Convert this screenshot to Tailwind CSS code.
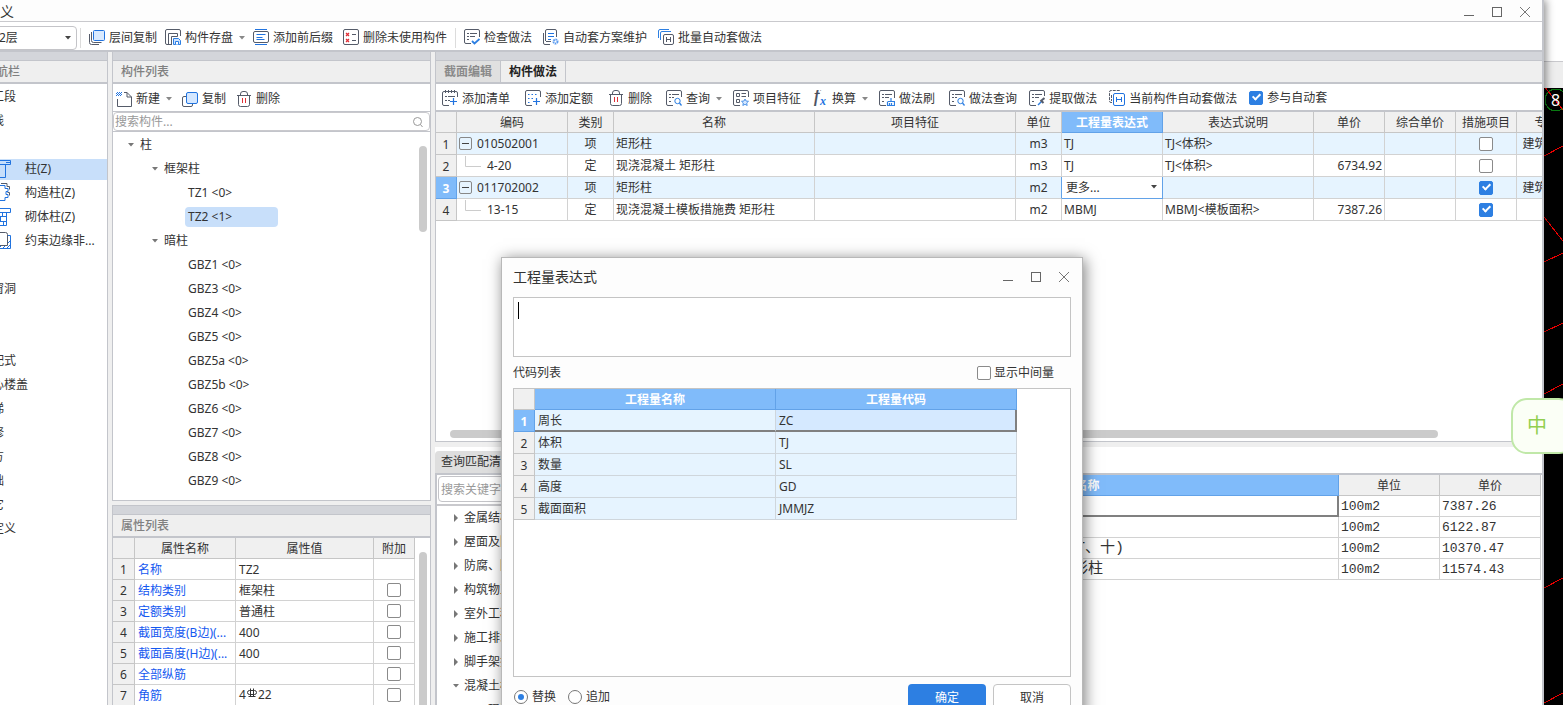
<!DOCTYPE html>
<html lang="zh-CN">
<head>
<meta charset="utf-8">
<title>定义</title>
<script src="https://cdn.jsdelivr.net/npm/@tailwindcss/browser@4"></script>
</head>
<body class="relative flex h-screen overflow-hidden bg-white font-['Noto_Sans','Noto_Sans_CJK_SC',sans-serif] text-xs leading-4 text-[#333]">

<svg class="hidden" aria-hidden="true">
  <defs>
    <symbol id="i-floorcopy" viewBox="0 0 16 16" fill="none"><path d="M.5 5v8.500a2 2 0 0 0 2 2H10M2.500 3v8.500a2 2 0 0 0 2 2h8" stroke="#555b69"/><rect x="4.500" y="1.500" width="11" height="10" rx="1" fill="#d9eaff" stroke="#2173df"/></symbol>
    <symbol id="i-save" viewBox="0 0 16 16" fill="none"><path d="M7 15.500H2a1.500 1.500 0 0 1-1.500-1.500V2A1.500 1.500 0 0 1 2 .5h12A1.500 1.500 0 0 1 15.500 2v5M3.500 15V4.500h9v3h-6V15" stroke="#555b69"/><path d="M8.500 9.500h5l2 2v4h-7z" fill="#cfe3ff" stroke="#2d7fe2"/><path d="M10.500 15.500v-3h3v3" stroke="#2d7fe2" fill="#fff"/></symbol>
    <symbol id="i-prefix" viewBox="0 0 16 16" fill="none"><rect x=".5" y="2.500" width="15" height="11" rx="1.500" stroke="#555b69"/><path d="M2 .5h12M2 15.500h12M3.500 5.500h9M3.500 8.500h6M3.500 10.500h8" stroke="#2173df"/></symbol>
    <symbol id="i-unused" viewBox="0 0 16 16" fill="none"><rect x=".5" y=".5" width="15" height="15" rx="1.500" stroke="#555b69"/><path d="m3 4 3 3m0-3L3 7m0 3 3 3m0-3-3 3" stroke="#e02f37" stroke-width="1.300"/><path d="M9 5.500h4M9 11.500h4" stroke="#555b69"/></symbol>
    <symbol id="i-check" viewBox="0 0 16 16" fill="none"><path d="M7 14.500H2A1.500 1.500 0 0 1 .5 13V2A1.500 1.500 0 0 1 2 .5h12A1.500 1.500 0 0 1 15.500 2v6" stroke="#555b69"/><path d="M3 4.500h2m1 0h7M3 7.500h2m1 0h5M3 10.500h2" stroke="#555b69"/><path d="m8 12 2.500 2.500L15.500 10" stroke="#2d7fe2" stroke-width="1.800"/></symbol>
    <symbol id="i-plan" viewBox="0 0 16 16" fill="none"><path d="M7 15.500H2A1.500 1.500 0 0 1 .5 14V4M2.500 12V2A1.500 1.500 0 0 1 4 .5h8A1.500 1.500 0 0 1 13.500 2v6M3 12.500h5" stroke="#555b69"/><path d="M5 4.500h6M5 7.500h6M5 10.500h3" stroke="#2173df"/><circle cx="12.500" cy="12.500" r="2" stroke="#5c9cf0" stroke-width="2" stroke-dasharray="1.500 .6"/></symbol>
    <symbol id="i-batch" viewBox="0 0 16 16" fill="none"><path d="M.5 9V2A1.500 1.500 0 0 1 2 .5h9M2.500 11V4A1.500 1.500 0 0 1 4 2.500h9" stroke="#2d7fe2"/><rect x="5.500" y="5.500" width="10" height="10" rx="1.500" stroke="#555b69"/><path d="M8.500 8v5m4-5v5m-4-2.500h4" stroke="#555b69"/></symbol>
    <symbol id="i-auto" viewBox="0 0 16 16" fill="none"><path d="M3 12.500H2A1.500 1.500 0 0 1 .5 11V2A1.500 1.500 0 0 1 2 .5h9M2.500 5v6" stroke="#555b69" stroke-dasharray="3 1"/><rect x="4.500" y="3.500" width="11" height="12" rx="1.500" stroke="#2173df"/><path d="M7.500 7v5m5-5v5m-5-2.500h5" stroke="#2173df"/></symbol>
    <symbol id="i-new" viewBox="0 0 16 16" fill="none"><path d="M8 1.500h3l4.500 4.500v9.500H1.500V8M11 1.500V6h4.500" stroke="#555b69"/><path d="M1 1h1v1H1zM3 1h1v1H3zM2 2h1v1H2zM4 2h1v1H4zM1 3h1v1H1zM3 3h1v1H3zM2 4h1v1H2zM4 4h1v1H4zM0 2h1v1H0zM0 4h1v1H0zM5 1h1v1H5zM5 3h1v1H5z" fill="#2173df"/></symbol>
    <symbol id="i-copy" viewBox="0 0 16 16" fill="none"><path d="M4 5.500H2A1.500 1.500 0 0 0 .5 7v7A1.500 1.500 0 0 0 2 15.500h7a1.500 1.500 0 0 0 1.500-1.500v-1" stroke="#555b69"/><rect x="4.500" y="1.500" width="11" height="11" rx="1.500" fill="#d4e7ff" stroke="#2173df"/></symbol>
    <symbol id="i-del" viewBox="0 0 16 16" fill="none"><path d="M1 4.500h14M4.500 4V3A2.500 2.500 0 0 1 7 .5h2A2.500 2.500 0 0 1 11.500 3v1M2.500 4.500v9a2 2 0 0 0 2 2h7a2 2 0 0 0 2-2v-9" stroke="#555b69"/><path d="M6.500 7v5m3-5v5" stroke="#e02f37"/></symbol>
    <symbol id="i-addlist" viewBox="0 0 16 16" fill="none"><path d="M7 15.500H2A1.500 1.500 0 0 1 .5 14V3A1.500 1.500 0 0 1 2 1.500h12A1.500 1.500 0 0 1 15.500 3v4M3.500 0v3m3-3v3m3-3v3m3-3v3M3 6.500h2m1 0h7M3 10.500h2m1 0h2" stroke="#555b69"/><path d="M11.500 8v7M8 11.500h7" stroke="#2173df" stroke-width="1.200"/></symbol>
    <symbol id="i-addquota" viewBox="0 0 16 16" fill="none"><path d="M7 15.500H2A1.500 1.500 0 0 1 .5 14V2A1.500 1.500 0 0 1 2 .5h12A1.500 1.500 0 0 1 15.500 2v5" stroke="#555b69"/><path d="M3 4.500h1.500m2 0H8m2 0h1.500M3 8.500h1.500m2 0H8M3 12.500h1.500" stroke="#2173df" stroke-width="1.200"/><path d="M11.500 8v7M8 11.500h7" stroke="#2173df" stroke-width="1.200"/></symbol>
    <symbol id="i-query" viewBox="0 0 16 16" fill="none"><path d="M7 15.500H2A1.500 1.500 0 0 1 .5 14V2A1.500 1.500 0 0 1 2 .5h12A1.500 1.500 0 0 1 15.500 2v5M3 4.500h2m1 0h7M3 7.500h2m1 0h2M3 11.500h2" stroke="#555b69"/><circle cx="11.500" cy="11" r="2.700" stroke="#2d7fe2"/><path d="m13.500 13 2 2.500" stroke="#2d7fe2" stroke-width="1.300"/></symbol>
    <symbol id="i-feature" viewBox="0 0 16 16" fill="none"><path d="M7 15.500H2A1.500 1.500 0 0 1 .5 14V2A1.500 1.500 0 0 1 2 .5h12A1.500 1.500 0 0 1 15.500 2v5M3.500 3.500h3v3h-3zM3.500 9.500h3v3h-3zM8.500 3.500H13M8.500 6.500H13" stroke="#555b69"/><path d="m12 9 1 2 2.500.3-1.800 1.700.5 2.500-2.200-1.200-2.200 1.200.5-2.500-1.800-1.700L11 11z" fill="#d4e7ff" stroke="#2d7fe2" stroke-width=".8"/></symbol>
    <symbol id="i-fx" viewBox="0 0 16 16"><text x="2" y="12" font-family="Liberation Serif" font-style="italic" font-size="18" fill="#444a58" stroke="#444a58" stroke-width=".4">f</text><text x="8" y="15" font-family="Liberation Serif" font-style="italic" font-weight="bold" font-size="12" fill="#2173df">x</text></symbol>
    <symbol id="i-brush" viewBox="0 0 16 16" fill="none"><path d="M7 15.500H2A1.500 1.500 0 0 1 .5 14V2A1.500 1.500 0 0 1 2 .5h12A1.500 1.500 0 0 1 15.500 2v6M3 4.500h2m1 0h7M3 7.500h2m1 0h4M3 11.500h2" stroke="#555b69"/><path d="M12 8v3M9 11.500h6.500V15.500H8.500v-4M10.500 15v-2m2 2v-2" stroke="#2d7fe2" stroke-width="1.200"/></symbol>
    <symbol id="i-extract" viewBox="0 0 16 16" fill="none"><path d="M7 15.500H2A1.500 1.500 0 0 1 .5 14V2A1.500 1.500 0 0 1 2 .5h12A1.500 1.500 0 0 1 15.500 2v4M3 4.500h2m1 0h7M3 7.500h2m1 0h4M3 11.500h2" stroke="#555b69"/><path d="m9 15 4-4" stroke="#2d7fe2" stroke-width="1.500"/><path d="m11.500 10 3 3m-1.500-3 2.500-2" stroke="#555b69" stroke-width="2"/></symbol>
    <symbol id="i-min" viewBox="0 0 12 12" fill="none"><path d="M1 9.500h10" stroke="#666"/></symbol>
    <symbol id="i-max" viewBox="0 0 12 12" fill="none"><rect x="1.500" y="1.500" width="9" height="9" stroke="#666"/></symbol>
    <symbol id="i-close" viewBox="0 0 12 12" fill="none"><path d="m1 1 10 10M11 1 1 11" stroke="#777"/></symbol>
    <symbol id="i-down" viewBox="0 0 6 4"><path d="M0 0h6L3 3.500z" fill="currentColor"/></symbol>
    <symbol id="i-right" viewBox="0 0 4 8"><path d="M0 0v8l4-4z" fill="currentColor"/></symbol>
  </defs>
</svg>

<!-- main window; its first 20px lie beyond the left edge of the screen -->
<main class="relative z-10 -ml-5 flex min-w-0 flex-1 flex-col border-r-2 border-[#c3c5cb] bg-white shadow-[2px_0_8px_rgba(0,0,0,0.45)]">
  <header class="flex h-[22px] shrink-0 items-center justify-between border-b border-[#c9c9cd] bg-[#fdfdfd] pt-0.5 pr-[11px]">
    <h1 class="pl-1.5 text-sm">定义</h1>
    <div class="flex gap-4">
      <button aria-label="最小化"><svg class="size-3"><use href="#i-min"/></svg></button>
      <button aria-label="最大化"><svg class="size-3"><use href="#i-max"/></svg></button>
      <button aria-label="关闭"><svg class="size-3"><use href="#i-close"/></svg></button>
    </div>
  </header>

  <div class="flex h-7 shrink-0 items-center gap-2 whitespace-nowrap pt-1 leading-[18px] [&_button]:flex [&_button]:items-start [&_button]:gap-1 [&_button>svg:first-child]:size-4">
    <div class="relative -mr-[5px]">
      <select aria-label="楼层" class="h-6 w-[97px] appearance-none rounded border border-[#c4c4c8] bg-white pl-1.5"><option>第2层</option></select>
      <svg class="pointer-events-none absolute top-2.5 right-1.5 h-1 w-1.5 text-[#444]"><use href="#i-down"/></svg>
    </div>
    <span class="h-5 w-px bg-[#dcdcdc]"></span>
    <div class="flex items-center gap-2">
      <button><svg><use href="#i-floorcopy"/></svg>层间复制</button>
      <button><svg><use href="#i-save"/></svg>构件存盘<svg class="ml-0.5 h-1 w-1.5 self-center text-[#888]"><use href="#i-down"/></svg></button>
      <button><svg><use href="#i-prefix"/></svg>添加前后缀</button>
      <button class="pl-0.5"><svg><use href="#i-unused"/></svg>删除未使用构件</button>
    </div>
    <span class="h-5 w-px bg-[#dcdcdc]"></span>
    <div class="flex items-center gap-[11px]">
      <button><svg><use href="#i-check"/></svg>检查做法</button>
      <button><svg><use href="#i-plan"/></svg>自动套方案维护</button>
      <button><svg><use href="#i-batch"/></svg>批量自动套做法</button>
    </div>
  </div>

  <div class="flex min-h-0 flex-1 gap-1 border-t-2 border-[#c3c5cb] bg-[#efefef]">
    <!-- navigation -->
    <nav class="flex w-32 shrink-0 flex-col border-r border-[#c3c5cb] bg-white">
      <div class="h-[9px] shrink-0 border-b border-[#c3c5cb] bg-[#d3d5da]"></div>
      <h2 class="h-[23px] shrink-0 border-b-2 border-[#c3c5cb] bg-[#efefef] pt-[3px] pl-1 font-medium text-[#808080]">导航栏</h2>
      <ul class="[&>li]:flex [&>li]:h-6 [&>li]:items-center [&>li]:pt-0.5 [&>li]:whitespace-nowrap [&_svg]:ml-3 [&_svg]:mr-[13px] [&_svg]:size-5 [&_svg]:shrink-0">
        <li>施工段</li>
        <li>轴线</li>
        <li></li>
        <li><a href="#" class="flex h-[21px] w-full items-center bg-[#c8dffa]"><svg viewBox="0 0 20 20" fill="none" stroke="#2173df"><path d="M1 1.500h17.500v4H1zM5.500 5.500v13h8v-13M14 3.500h4"/></svg>柱(Z)</a></li>
        <li><a href="#" class="flex items-center"><svg viewBox="0 0 20 20" fill="none" stroke="#2173df"><path d="M4 2.500h9v3h3v3h-2v3h2v3h-3v3H4"/><path d="M9 .5h6v3h2.500v3M15.500 9.500h2v3" stroke="#555b69"/></svg>构造柱(Z)</a></li>
        <li><a href="#" class="flex items-center"><svg viewBox="0 0 20 20" fill="none" stroke="#2173df"><path d="M1 1.500h17.500v4H1zM5.500 5.500v13h9v-13M6 9.500h8M6 14.500h8M10.500 6v4M8.500 10v4M11.500 15v4"/></svg>砌体柱(Z)</a></li>
        <li><a href="#" class="flex items-center"><svg viewBox="0 0 20 20" fill="none" stroke="#2173df"><path d="M16 4.500h2.500v13H3M15 17l3-3M11 17l7-7M7 17l3-3"/><path d="M3 1.500h10.500a2 2 0 0 1 2 2v11H3" fill="#fff" stroke="#555b69"/></svg>约束边缘非...</a></li>
        <li></li>
        <li>门窗洞</li>
        <li></li>
        <li></li>
        <li>装配式</li>
        <li>空心楼盖</li>
        <li>楼梯</li>
        <li>装修</li>
        <li>土方</li>
        <li>基础</li>
        <li>其它</li>
        <li>自定义</li>
      </ul>
    </nav>

    <!-- component list and properties -->
    <div class="flex w-[319px] shrink-0 flex-col gap-1">
      <section class="flex min-h-0 flex-1 flex-col border-x border-[#c3c5cb]">
        <div class="h-[9px] shrink-0 border-b border-[#c3c5cb] bg-[#d3d5da]"></div>
        <h2 class="h-[23px] shrink-0 border-b-2 border-[#c3c5cb] pt-[3px] pl-2 font-medium text-[#808080]">构件列表</h2>
        <div class="flex h-7 shrink-0 items-center gap-2.5 border-b border-[#c3c5cb] bg-white pt-0.5 pl-[3px] [&_button]:flex [&_button]:items-center [&_button]:gap-1 [&_button>svg:first-child]:size-4">
          <button><svg><use href="#i-new"/></svg>新建<svg class="ml-0.5 h-1 w-1.5 text-[#888]"><use href="#i-down"/></svg></button>
          <button><svg><use href="#i-copy"/></svg>复制</button>
          <button><svg><use href="#i-del"/></svg>删除</button>
        </div>
        <div class="relative shrink-0 bg-white">
          <input type="text" aria-label="搜索构件" placeholder="搜索构件..." class="block h-[19px] w-full rounded border border-[#c9c9cd] pl-px leading-4 placeholder:text-[#999]">
          <svg class="absolute top-1 right-1.5 size-3" viewBox="0 0 12 12" fill="none" stroke="#999"><circle cx="5.500" cy="5.500" r="4"/><path d="m8.500 8.500 2 2.500"/></svg>
        </div>
        <div class="relative min-h-0 flex-1 overflow-hidden border-y border-[#c3c5cb] bg-white">
          <ul class="[&_li]:flex [&_li]:h-6 [&_li]:items-center [&_li]:pt-0.5 [&_svg]:mr-1.5 [&_svg]:h-1 [&_svg]:w-1.5 [&_svg]:text-[#777]">
            <li class="pl-[15px]"><svg><use href="#i-down"/></svg>柱</li>
            <li class="pl-[39px]"><svg><use href="#i-down"/></svg>框架柱</li>
            <li class="pl-[75px]">TZ1 &lt;0&gt;</li>
            <li class="pl-[72px]"><span class="w-[93px] rounded bg-[#c8dffa] py-0.5 pl-[3px]">TZ2 &lt;1&gt;</span></li>
            <li class="pl-[39px]"><svg><use href="#i-down"/></svg>暗柱</li>
            <li class="pl-[75px]">GBZ1 &lt;0&gt;</li>
            <li class="pl-[75px]">GBZ3 &lt;0&gt;</li>
            <li class="pl-[75px]">GBZ4 &lt;0&gt;</li>
            <li class="pl-[75px]">GBZ5 &lt;0&gt;</li>
            <li class="pl-[75px]">GBZ5a &lt;0&gt;</li>
            <li class="pl-[75px]">GBZ5b &lt;0&gt;</li>
            <li class="pl-[75px]">GBZ6 &lt;0&gt;</li>
            <li class="pl-[75px]">GBZ7 &lt;0&gt;</li>
            <li class="pl-[75px]">GBZ8 &lt;0&gt;</li>
            <li class="pl-[75px]">GBZ9 &lt;0&gt;</li>
          </ul>
          <div class="absolute top-3.5 right-[3px] h-[86px] w-2 rounded-full bg-[#cbcbcb]"></div>
        </div>
      </section>

      <section class="flex h-[200px] shrink-0 flex-col overflow-hidden border-x border-[#c3c5cb]">
        <div class="h-[10px] shrink-0 border-y border-[#c3c5cb] bg-[#d3d5da]"></div>
        <h2 class="h-[23px] shrink-0 border-b-2 border-[#c3c5cb] pt-[3px] pl-2 font-medium text-[#808080]">属性列表</h2>
        <div class="relative flex-1 bg-white">
          <table class="w-[302px] table-fixed border-separate border-spacing-0 [&_td]:border-r [&_td]:border-b [&_td]:border-[#d2d2d2] [&_td]:p-0 [&_td]:pt-0.5 [&_td]:pl-[3px] [&_td:nth-child(2)]:text-[#1458f0] [&_td:last-child]:pt-0 [&_td:last-child]:pl-0 [&_td:last-child]:text-center [&_th]:border-r [&_th]:border-b [&_th]:border-[#c6c6c6] [&_th]:bg-[#f0f0f0] [&_th]:p-0 [&_th]:pt-0.5 [&_th]:font-normal [&_tr]:h-[21px] [&_input]:block [&_input]:mx-auto [&_input]:size-3.5 [&_input]:appearance-none [&_input]:rounded-xs [&_input]:border [&_input]:border-[#8a8a8a] [&_input]:bg-white">
            <thead><tr><th class="w-[22px]"></th><th class="w-[101px]">属性名称</th><th class="w-[138px]">属性值</th><th class="w-[41px]">附加</th></tr></thead>
            <tbody>
              <tr><th>1</th><td>名称</td><td>TZ2</td><td></td></tr>
              <tr><th>2</th><td>结构类别</td><td>框架柱</td><td><input type="checkbox" aria-label="附加 结构类别"></td></tr>
              <tr><th>3</th><td>定额类别</td><td>普通柱</td><td><input type="checkbox" aria-label="附加 定额类别"></td></tr>
              <tr><th>4</th><td class="whitespace-nowrap">截面宽度(B边)(...</td><td>400</td><td><input type="checkbox" aria-label="附加 截面宽度"></td></tr>
              <tr><th>5</th><td class="whitespace-nowrap">截面高度(H边)(...</td><td>400</td><td><input type="checkbox" aria-label="附加 截面高度"></td></tr>
              <tr><th>6</th><td>全部纵筋</td><td></td><td><input type="checkbox" aria-label="附加 全部纵筋"></td></tr>
              <tr><th>7</th><td>角筋</td><td class="pt-0!"><span class="flex items-center">4<svg class="mx-px mb-1 size-2.5" viewBox="0 0 10 10" fill="none" stroke="#333"><rect x=".5" y="2.500" width="9" height="4" rx="2"/><path d="M3.500.5v8M6.500.5v8M1.500 8.500h7"/></svg>22</span></td><td><input type="checkbox" aria-label="附加 角筋"></td></tr>
            </tbody>
          </table>
          <div class="absolute top-3.5 right-[3px] bottom-0 w-2 rounded-t-full bg-[#cbcbcb]"></div>
        </div>
      </section>
    </div>

    <!-- method editor -->
    <div class="flex min-w-0 flex-1 flex-col gap-[5px]">
      <section class="flex min-h-0 flex-1 flex-col border-b border-l border-[#c3c5cb]">
        <div class="h-[9px] shrink-0 border-b border-[#c3c5cb] bg-[#d3d5da]"></div>
        <div class="flex h-[23px] shrink-0 border-b-2 border-[#c3c5cb] font-bold [&_button]:w-[65px] [&_button]:border-r [&_button]:border-[#c3c5cb]">
          <button class="bg-[#e0e0e0] text-[#8a8a8a]">截面编辑</button>
          <button class="text-[#222]">构件做法</button>
        </div>
        <div class="flex h-7 shrink-0 items-center gap-3.5 overflow-hidden border-b-2 border-[#c3c5cb] bg-white pt-1 pl-1.5 leading-[18px] whitespace-nowrap [&_button]:flex [&_button]:items-start [&_button]:gap-1 [&_button>svg:first-child]:size-4">
          <div class="flex gap-[15px]">
            <button><svg><use href="#i-addlist"/></svg>添加清单</button>
            <button><svg><use href="#i-addquota"/></svg>添加定额</button>
            <button><svg><use href="#i-del"/></svg>删除</button>
          </div>
          <div class="flex gap-[11px]">
            <button><svg><use href="#i-query"/></svg>查询<svg class="ml-0.5 h-1 w-1.5 self-center text-[#888]"><use href="#i-down"/></svg></button>
            <button><svg><use href="#i-feature"/></svg>项目特征</button>
            <button><svg><use href="#i-fx"/></svg>换算<svg class="ml-0.5 h-1 w-1.5 self-center text-[#888]"><use href="#i-down"/></svg></button>
            <button><svg><use href="#i-brush"/></svg>做法刷</button>
          </div>
          <div class="flex items-start gap-3">
            <button><svg><use href="#i-query"/></svg>做法查询</button>
            <button><svg><use href="#i-extract"/></svg>提取做法</button>
            <button><svg><use href="#i-auto"/></svg>当前构件自动套做法</button>
            <label class="flex items-center gap-1 leading-4"><input type="checkbox" checked class="flex size-3.5 appearance-none justify-center rounded-xs border border-[#8a8a8a] checked:border-[#2d7fe2] checked:bg-[#2d7fe2] checked:before:h-2 checked:before:w-[5px] checked:before:rotate-45 checked:before:border-r-2 checked:before:border-b-2 checked:before:border-white">参与自动套</label>
          </div>
        </div>
        <div class="relative min-h-0 flex-1 overflow-hidden bg-white">
          <table class="w-[1141px] table-fixed border-separate border-spacing-0 whitespace-nowrap [&_td]:border-r [&_td]:border-b [&_td]:border-[#d2d2d2] [&_td]:p-0 [&_td]:px-0.5 [&_th]:border-r [&_th]:border-b [&_th]:border-[#c6c6c6] [&_th]:bg-[#f0f0f0] [&_th]:p-0 [&_th]:pt-0.5 [&_th]:font-normal [&_tbody_tr]:h-[22px] [&_input]:mx-auto [&_input]:flex [&_input]:justify-center [&_input]:size-3.5 [&_input]:appearance-none [&_input]:rounded-xs [&_input]:border [&_input]:border-[#8a8a8a] [&_input]:bg-white [&_input:checked]:border-[#2d7fe2] [&_input:checked]:bg-[#2d7fe2] [&_input:checked]:before:h-2 [&_input:checked]:before:w-[5px] [&_input:checked]:before:rotate-45 [&_input:checked]:before:border-r-2 [&_input:checked]:before:border-b-2 [&_input:checked]:before:border-white">
            <thead><tr class="h-[21px]">
              <th class="w-[21px]"></th><th class="w-[111px]">编码</th><th class="w-[46px]">类别</th><th class="w-[201px]">名称</th><th class="w-[201px]">项目特征</th><th class="w-[46px]">单位</th><th class="w-[101px] border-[#62a2e8]! bg-[#80bbfa]! font-bold! text-white">工程量表达式</th><th class="w-[151px]">表达式说明</th><th class="w-[71px]">单价</th><th class="w-[71px]">综合单价</th><th class="w-[61px]">措施项目</th><th class="w-[60px]">专业</th>
            </tr></thead>
            <tbody>
              <tr class="bg-[#e6f4ff]"><th>1</th><td><span class="flex items-center gap-[5px]"><svg class="size-[13px]" viewBox="0 0 13 13" fill="none"><rect x=".5" y=".5" width="12" height="12" rx="1.500" stroke="#888"/><path d="M3 6.500h7" stroke="#444"/></svg>010502001</span></td><td class="text-center">项</td><td>矩形柱</td><td></td><td class="text-center">m3</td><td>TJ</td><td>TJ&lt;体积&gt;</td><td></td><td></td><td><input type="checkbox" aria-label="措施项目 1"></td><td class="text-center">建筑工程</td></tr>
              <tr><th>2</th><td><span class="flex items-center gap-1.5"><svg class="ml-1.5 h-5 w-4" viewBox="0 0 16 20" fill="none" stroke="#ccc"><path d="M.5 0v10.500H16"/></svg>4-20</span></td><td class="text-center">定</td><td>现浇混凝土 矩形柱</td><td></td><td class="text-center">m3</td><td>TJ</td><td>TJ&lt;体积&gt;</td><td class="text-right">6734.92</td><td></td><td><input type="checkbox" aria-label="措施项目 2"></td><td class="text-center">...</td></tr>
              <tr class="bg-[#e6f4ff]"><th class="border-[#62a2e8]! bg-[#80bbfa]! font-bold! text-white">3</th><td><span class="flex items-center gap-[5px]"><svg class="size-[13px]" viewBox="0 0 13 13" fill="none"><rect x=".5" y=".5" width="12" height="12" rx="1.500" stroke="#888"/><path d="M3 6.500h7" stroke="#444"/></svg>011702002</span></td><td class="text-center">项</td><td>矩形柱</td><td></td><td class="border-[#62a2e8]! border-b-[#d2d2d2]! text-center">m2</td><td class="relative border-[#62a2e8]! bg-white p-0!"><select aria-label="工程量表达式" class="block h-[21px] w-full appearance-none bg-white pl-1"><option>更多...</option></select><svg class="pointer-events-none absolute top-2 right-[5px] h-1 w-1.5 text-[#444]"><use href="#i-down"/></svg></td><td></td><td></td><td></td><td><input type="checkbox" checked aria-label="措施项目 3"></td><td class="text-center">建筑工程</td></tr>
              <tr><th>4</th><td><span class="flex items-center gap-1.5"><svg class="ml-1.5 h-5 w-4" viewBox="0 0 16 20" fill="none" stroke="#ccc"><path d="M.5 0v10.500H16"/></svg>13-15</span></td><td class="text-center">定</td><td>现浇混凝土模板措施费 矩形柱</td><td></td><td class="text-center">m2</td><td>MBMJ</td><td>MBMJ&lt;模板面积&gt;</td><td class="text-right">7387.26</td><td></td><td><input type="checkbox" checked aria-label="措施项目 4"></td><td class="text-center">...</td></tr>
            </tbody>
          </table>
          <div class="absolute right-[104px] bottom-[3px] left-3.5 h-2 rounded-full bg-[#cbcbcb]"></div>
        </div>
      </section>

      <section class="flex h-[258px] shrink-0 flex-col overflow-hidden bg-white">
        <div class="flex h-7 shrink-0 items-end border-b-2 border-[#c3c5cb]">
          <button class="h-[22px] rounded-t bg-[#dedede] px-1.5">查询匹配清单</button>
        </div>
        <div class="flex min-h-0 flex-1 pr-px">
          <div class="w-[381px] shrink-0 border-l-2 border-[#c3c5cb]">
            <div class="border-b-2 border-[#c9c9cd] p-px pb-0.5">
              <input type="text" aria-label="搜索关键字" placeholder="搜索关键字" class="block h-[26px] w-full rounded border border-[#c4c4c8] pl-0.5 placeholder:text-[#999]">
            </div>
            <ul class="[&_li]:flex [&_li]:h-6 [&_li]:items-center [&_li]:gap-1.5 [&_li]:pl-[17px] [&_svg]:h-2 [&_svg]:w-1 [&_svg]:text-[#777]">
              <li><svg><use href="#i-right"/></svg>金属结构工程</li>
              <li><svg><use href="#i-right"/></svg>屋面及防水工程</li>
              <li><svg><use href="#i-right"/></svg>防腐、隔热、保温工程</li>
              <li><svg><use href="#i-right"/></svg>构筑物工程</li>
              <li><svg><use href="#i-right"/></svg>室外工程</li>
              <li><svg><use href="#i-right"/></svg>施工排水、降水</li>
              <li><svg><use href="#i-right"/></svg>脚手架措施费</li>
              <li><svg class="-mx-px h-1! w-1.5!"><use href="#i-down"/></svg>混凝土模板措施费</li>
              <li><span class="pl-[34px]">现浇混凝土</span></li>
            </ul>
          </div>
          <table class="h-[105px] w-full table-fixed border-separate border-spacing-0 whitespace-nowrap [&_td]:border-r [&_td]:border-b [&_td]:border-[#d2d2d2] [&_td]:p-0 [&_td]:pt-0.5 [&_td]:pl-0.5 [&_td]:font-['Liberation_Mono','Noto_Sans_CJK_SC',monospace] [&_td]:text-[13px] [&_th]:border-r [&_th]:border-b [&_th]:border-[#c6c6c6] [&_th]:bg-[#f0f0f0] [&_th]:p-0 [&_th]:pt-0.5 [&_th]:font-normal [&_tr]:h-[21px] [&_td:nth-child(2)]:text-[15px]">
            <thead><tr><th class="w-[21px]"></th><th class="border-[#62a2e8]! bg-[#80bbfa]! font-bold! text-white">名称</th><th class="w-[101px]">单位</th><th class="w-[101px]">单价</th></tr></thead>
            <tbody>
              <tr><th>1</th><td class="border-r-2! border-b-2! border-[#808080]!">现浇混凝土模板措施费 矩形柱</td><td>100m2</td><td>7387.26</td></tr>
              <tr><th>2</th><td>现浇混凝土模板措施费 构造柱</td><td>100m2</td><td>6122.87</td></tr>
              <tr><th>3</th><td>现浇混凝土模板措施费 异形柱(L、T、十)</td><td>100m2</td><td>10370.47</td></tr>
              <tr><th>4</th><td>现浇混凝土模板措施费 圆形及多边形柱</td><td>100m2</td><td>11574.43</td></tr>
            </tbody>
          </table>
        </div>
      </section>
    </div>
  </div>
</main>

<!-- application behind the window -->
<aside class="flex w-[19px] shrink-0 flex-col overflow-hidden">
  <div class="h-[61px] shrink-0"></div>
  <div class="h-[27px] shrink-0 border-t border-[#c9c9cd] bg-[#eeeeee]"></div>
  <div class="min-h-0 flex-1 bg-black">
    <svg class="h-[617px] w-[19px]" viewBox="0 0 19 617" fill="none" stroke="#e00" shape-rendering="crispEdges">
      <circle cx="12" cy="12" r="11" stroke="#0a7a12"/>
      <path d="M0-2 19 22M0 68l19-10M0 129l19 24M0 174l19-9M0 244l19-9M0 306l19-10M0 500l19-10M0 615l19-10"/>
      <text x="7" y="18" font-family="Noto Sans" font-size="16" fill="#fff" stroke="none">8</text>
    </svg>
  </div>
</aside>

<!-- expression dialog -->
<div role="dialog" aria-labelledby="dlg-title" class="absolute top-[257px] left-[501px] z-20 w-[582px] border border-[#b8b8b8] bg-[#fdfdfd] px-[11px] pb-3 text-[#333] shadow-[2px_2px_14px_rgba(0,0,0,0.5)]">
  <div class="flex h-[39px] items-center justify-between pr-px pb-0.5">
    <h2 id="dlg-title" class="text-sm">工程量表达式</h2>
    <div class="flex gap-4">
      <button aria-label="最小化"><svg class="size-3"><use href="#i-min"/></svg></button>
      <button aria-label="最大化"><svg class="size-3"><use href="#i-max"/></svg></button>
      <button aria-label="关闭"><svg class="size-3"><use href="#i-close"/></svg></button>
    </div>
  </div>
  <div class="relative">
    <textarea aria-label="工程量表达式" class="block h-[60px] w-full resize-none border border-[#c4c4c4] bg-white p-1"></textarea>
    <span class="absolute top-[5px] left-[5px] h-[17px] w-px bg-black"></span>
  </div>
  <div class="flex h-[31px] items-center justify-between pr-[17px]">
    <h3>代码列表</h3>
    <label class="flex items-center gap-[3px]"><input type="checkbox" class="size-3.5 appearance-none rounded-xs border border-[#8a8a8a] bg-white">显示中间量</label>
  </div>
  <div class="h-[289px] border border-[#c4c4c4] bg-white">
    <table class="w-[503px] table-fixed border-separate border-spacing-0 [&_td]:border-r [&_td]:border-b [&_td]:border-[#cfd6dc] [&_td]:bg-[#e6f4ff] [&_td]:p-0 [&_td]:pl-[3px] [&_th]:border-r [&_th]:border-b [&_th]:border-[#c6c6c6] [&_th]:bg-[#f0f0f0] [&_th]:p-0 [&_th]:pt-0.5 [&_th]:font-normal [&_tbody_tr]:h-[22px]">
      <thead><tr class="h-[21px]"><th class="w-[21px]"></th><th class="border-[#62a2e8]! bg-[#80bbfa]! font-bold! text-white">工程量名称</th><th class="w-[241px] border-[#62a2e8]! bg-[#80bbfa]! font-bold! text-white">工程量代码</th></tr></thead>
      <tbody>
        <tr><th class="border-[#62a2e8]! bg-[#80bbfa]! font-bold! text-white">1</th><td class="border-b-2! border-b-[#808080]! pt-px!">周长</td><td class="border-r-2! border-b-2! border-[#808080]! bg-[#d5e9ff]! pt-px!">ZC</td></tr>
        <tr><th>2</th><td>体积</td><td>TJ</td></tr>
        <tr><th>3</th><td>数量</td><td>SL</td></tr>
        <tr><th>4</th><td>高度</td><td>GD</td></tr>
        <tr><th>5</th><td>截面面积</td><td>JMMJZ</td></tr>
      </tbody>
    </table>
  </div>
  <div class="flex items-center justify-between pt-[7px]">
    <div class="flex items-center gap-3 pl-px [&_input]:flex [&_input]:size-3.5 [&_input]:appearance-none [&_input]:items-center [&_input]:justify-center [&_input]:rounded-full [&_input]:border [&_input]:border-[#777] [&_input]:bg-white [&_input:checked]:before:size-1.5 [&_input:checked]:before:rounded-full [&_input:checked]:before:bg-[#2d7fe2] [&_label]:flex [&_label]:items-center [&_label]:gap-1">
      <label><input type="radio" name="mode" checked>替换</label>
      <label><input type="radio" name="mode">追加</label>
    </div>
    <div class="flex gap-[7px]">
      <button class="h-[26px] w-[78px] rounded bg-[#2d7fe2] pt-0.5 text-white">确定</button>
      <button class="h-[26px] w-[78px] rounded border border-[#c4c4c4] bg-white pt-0.5">取消</button>
    </div>
  </div>
</div>

<!-- input method badge -->
<div class="absolute top-[398px] -right-3 z-30 flex h-14 w-16 items-center rounded-2xl border-2 border-[#c0e8a8] bg-[#fbfff6] pl-3.5 text-xl text-[#92cf50]">中</div>
</body>
</html>
